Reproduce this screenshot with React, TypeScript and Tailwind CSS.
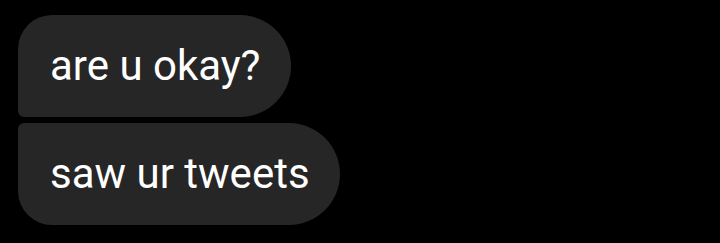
export default function App() {
  return (
    <div className="w-[720px] h-[243px] bg-black overflow-hidden pt-[15px] pl-[18px]" style={{ fontFamily: 'Roboto, "Noto Sans", sans-serif' }}>
      <div className="flex flex-col items-start gap-[6px]">
        <div className="h-[102px] w-[273px] flex items-center pl-[32px] bg-[#262626] text-white text-[42px] leading-none rounded-tl-[34px] rounded-bl-[6px] rounded-r-[51px]">
          are u okay?
        </div>
        <div className="h-[102px] w-[322px] flex items-center pl-[32px] bg-[#262626] text-white text-[42px] leading-none rounded-tl-[6px] rounded-bl-[34px] rounded-r-[51px]">
          saw ur tweets
        </div>
      </div>
    </div>
  )
}
